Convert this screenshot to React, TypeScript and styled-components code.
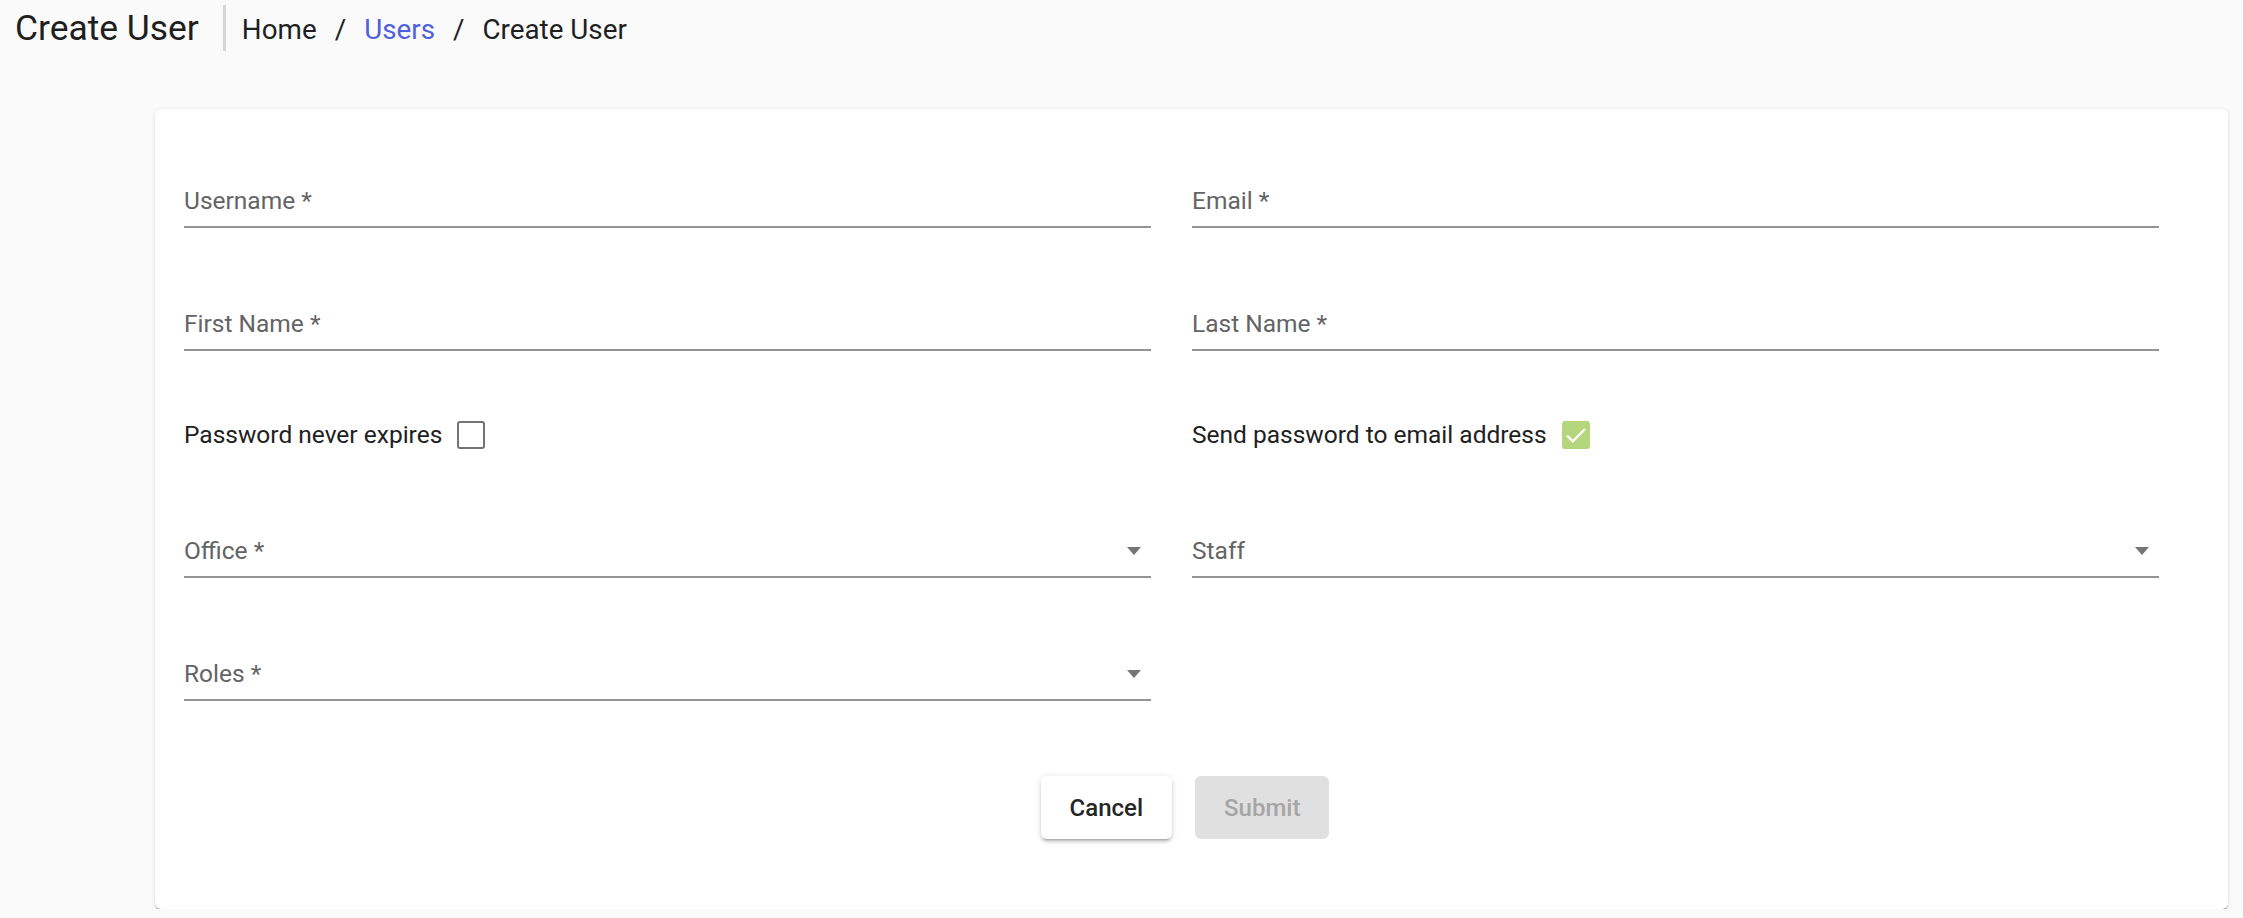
import React, { useState } from 'react';
import styled, { createGlobalStyle } from 'styled-components';

const GlobalStyle = createGlobalStyle`
  html, body {
    margin: 0;
    padding: 0;
    background: #fafafa;
    font-family: Roboto, "Liberation Sans", Arial, sans-serif;
  }
`;

const Header = styled.header`
  display: flex;
  align-items: center;
  height: 56px;
  padding-left: 15px;
`;

const Title = styled.h1`
  margin: 0;
  font-size: 35.4px;
  font-weight: 400;
  line-height: 35px;
  padding-top: 1px;
  color: #1f1f1f;
`;

const Divider = styled.div`
  width: 3px;
  height: 46px;
  background: #d6d6d6;
  margin: 0 16px 0 24px;
`;

const Crumbs = styled.nav`
  display: flex;
  align-items: center;
  padding-top: 3px;
  font-size: 27.8px;
  line-height: 28px;
  color: #1f1f1f;
`;

const Crumb = styled.span<{ $link?: boolean }>`
  color: ${(p) => (p.$link ? '#4f60df' : '#1f1f1f')};
  cursor: ${(p) => (p.$link ? 'pointer' : 'default')};
`;

const Sep = styled.span`
  padding: 0 18px;
`;

const Main = styled.main`
  padding: 53px 15px 0 155px;
`;

const Card = styled.section`
  background: #fff;
  border-radius: 6px;
  box-shadow: 0 3px 1px -1px rgba(0, 0, 0, 0.2), 0 1px 1px 0 rgba(0, 0, 0, 0.14),
    0 1px 4px 0 rgba(0, 0, 0, 0.12);
  padding: 77px 69px 70px 29px;
`;

const Row = styled.div<{ $mt?: number }>`
  display: grid;
  grid-template-columns: 1fr 1fr;
  column-gap: 41px;
  margin-top: ${(p) => p.$mt ?? 0}px;
`;

const Field = styled.div`
  display: flex;
  align-items: center;
  justify-content: space-between;
  padding-bottom: 10px;
  border-bottom: 2px solid #949494;
`;

const Label = styled.span`
  font-size: 24.5px;
  line-height: 30px;
  color: #646464;
`;

const Arrow = styled.span`
  width: 0;
  height: 0;
  margin-right: 10px;
  border-left: 7px solid transparent;
  border-right: 7px solid transparent;
  border-top: 8px solid #757575;
`;

const CheckLine = styled.label`
  display: flex;
  align-items: center;
  gap: 15px;
  font-size: 24.5px;
  line-height: 28px;
  color: #212121;
`;

const Box = styled.span<{ $checked?: boolean }>`
  display: inline-flex;
  align-items: center;
  justify-content: center;
  box-sizing: border-box;
  width: 28px;
  height: 28px;
  border-radius: 3px;
  border: ${(p) => (p.$checked ? 'none' : '2.5px solid #737373')};
  background: ${(p) => (p.$checked ? '#b4d67c' : 'transparent')};
`;

const Buttons = styled.div`
  display: flex;
  justify-content: center;
  gap: 23px;
  margin-top: 75px;
  padding-left: 27px;
`;

const Button = styled.button<{ $disabled?: boolean }>`
  height: 63px;
  padding: 0 29px;
  border: none;
  border-radius: 6px;
  font-family: Roboto, "Liberation Sans", Arial, sans-serif;
  font-size: 24px;
  font-weight: 500;
  background: ${(p) => (p.$disabled ? '#e0e0e0' : '#fff')};
  color: ${(p) => (p.$disabled ? '#a6a6a6' : '#262626')};
  box-shadow: ${(p) =>
    p.$disabled
      ? 'none'
      : '0 4px 2px -3px rgba(0,0,0,0.2), 0 3px 3px 0 rgba(0,0,0,0.14), 0 1px 7px 0 rgba(0,0,0,0.12)'};
`;

function TextField({ label }: { label: string }) {
  return (
    <Field>
      <Label>{label}</Label>
    </Field>
  );
}

function SelectField({ label }: { label: string }) {
  return (
    <Field>
      <Label>{label}</Label>
      <Arrow />
    </Field>
  );
}

function Check({ label, checked, onToggle }: { label: string; checked: boolean; onToggle: () => void }) {
  return (
    <CheckLine onClick={onToggle}>
      {label}
      <Box $checked={checked}>
        {checked && (
          <svg width="24" height="24" viewBox="0 0 24 24">
            <path d="M3 12.5l5.8 5.8L21 6" fill="none" stroke="#fff" strokeWidth="2.4" />
          </svg>
        )}
      </Box>
    </CheckLine>
  );
}

export default function App() {
  const [neverExpires, setNeverExpires] = useState(false);
  const [sendPassword, setSendPassword] = useState(true);

  return (
    <>
      <GlobalStyle />
      <Header>
        <Title>Create User</Title>
        <Divider />
        <Crumbs>
          <Crumb>Home</Crumb>
          <Sep>/</Sep>
          <Crumb $link>Users</Crumb>
          <Sep>/</Sep>
          <Crumb>Create User</Crumb>
        </Crumbs>
      </Header>
      <Main>
        <Card>
          <Row>
            <TextField label="Username *" />
            <TextField label="Email *" />
          </Row>
          <Row $mt={81}>
            <TextField label="First Name *" />
            <TextField label="Last Name *" />
          </Row>
          <Row $mt={70}>
            <Check label="Password never expires" checked={neverExpires} onToggle={() => setNeverExpires(!neverExpires)} />
            <Check label="Send password to email address" checked={sendPassword} onToggle={() => setSendPassword(!sendPassword)} />
          </Row>
          <Row $mt={87}>
            <SelectField label="Office *" />
            <SelectField label="Staff" />
          </Row>
          <Row $mt={81}>
            <SelectField label="Roles *" />
          </Row>
          <Buttons>
            <Button>Cancel</Button>
            <Button $disabled disabled>
              Submit
            </Button>
          </Buttons>
        </Card>
      </Main>
    </>
  );
}
